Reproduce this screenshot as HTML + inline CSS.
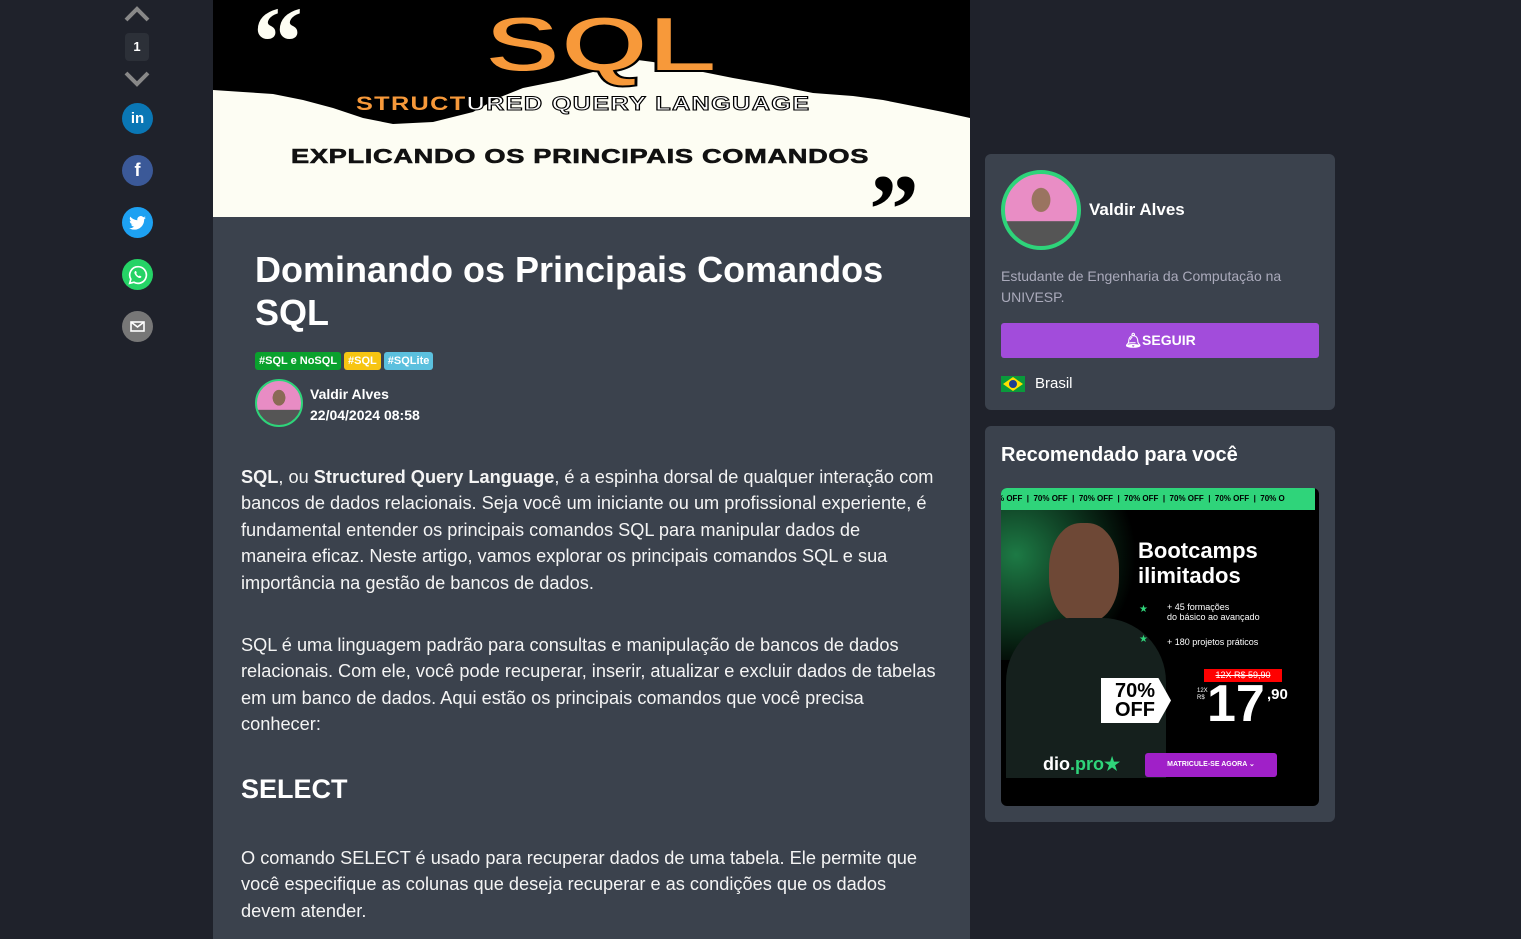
<!DOCTYPE html>
<html><head><meta charset="utf-8"><style>
*{margin:0;padding:0;box-sizing:border-box}
body{width:1521px;height:939px;overflow:hidden;background:#1f222b;font-family:"Liberation Sans",sans-serif;color:#fff;position:relative}
.abs{position:absolute}
.art{left:213px;top:0;width:757px;height:939px;background:#3b424d}
.banner{left:0;top:0;width:757px;height:217px;background:#fdfdf3;overflow:hidden}
.p{position:absolute;left:241px;font-size:18.2px;line-height:26.4px;color:#f4f4f4;white-space:nowrap}
.circ{position:absolute;left:122px;width:31px;height:31px;border-radius:50%;display:flex;align-items:center;justify-content:center;color:#fff;font-weight:bold}
.card{background:#3b424d;border-radius:6px}
.tag{display:inline-block;font-size:11px;font-weight:bold;padding:3px 4px;border-radius:3px;margin-right:3px;color:#fff}
.sx{transform-origin:0 0;white-space:nowrap}
</style></head><body>
<svg class="abs" style="left:124px;top:6px" width="26" height="16"><path d="M2 14 L13 3 L24 14" stroke="#888" stroke-width="4" fill="none"/></svg>
<div class="abs" style="left:125px;top:33px;width:24px;height:28px;background:#2c3038;border-radius:4px;font-size:13px;font-weight:bold;text-align:center;line-height:28px">1</div>
<svg class="abs" style="left:124px;top:71px" width="26" height="16"><path d="M2 2 L13 13 L24 2" stroke="#888" stroke-width="4" fill="none"/></svg>
<div class="circ" style="top:103px;background:#0a77b5;font-size:15px">in</div>
<div class="circ" style="top:155px;background:#3b5998;font-size:18px">f</div>
<div class="circ" style="top:207px;background:#1da1f2"><svg width="17" height="14" viewBox="0 0 24 20"><path d="M24 2.4a10 10 0 0 1-2.8.8A5 5 0 0 0 23.3.5a10 10 0 0 1-3.1 1.2A4.9 4.9 0 0 0 11.8 6 14 14 0 0 1 1.7.9a4.9 4.9 0 0 0 1.5 6.6A5 5 0 0 1 1 6.9a4.9 4.9 0 0 0 3.9 4.8 5 5 0 0 1-2.200.1 4.9 4.9 0 0 0 4.6 3.4A9.9 9.9 0 0 1 0 17.3 14 14 0 0 0 7.5 19.5c9 0 14-7.5 14-14v-.6A10 10 0 0 0 24 2.4z" fill="#fff"/></svg></div>
<div class="circ" style="top:259px;background:#25d366"><svg width="20" height="20" viewBox="0 0 24 24"><path d="M12 2a10 10 0 0 0-8.6 15L2 22l5.1-1.3A10 10 0 1 0 12 2z" fill="none" stroke="#fff" stroke-width="2"/><path d="M8.5 7.5c.5-.5 1.2-.3 1.4.3l.6 1.5c.1.4-.3.8-.6 1.1.6 1.3 1.7 2.4 3 3 .3-.3.7-.8 1.1-.6l1.5.6c.6.2.7 1 .3 1.4-.8.9-2 1.1-3.200.5-2-1-3.700-2.700-4.600-4.600-.6-1.200-.4-2.400.5-3.200z" fill="#fff"/></svg></div>
<div class="circ" style="top:311px;background:#777"><svg width="15" height="11"><rect x="1" y="1" width="13" height="9" fill="none" stroke="#fff" stroke-width="1.6"/><path d="M1 1 L7.5 6 L14 1" fill="none" stroke="#fff" stroke-width="1.6"/></svg></div>

<div class="abs art">
 <div class="abs banner">
  <svg width="757" height="217" style="position:absolute;left:0;top:0">
   <path d="M0 0 H757 V118 L730 112 L700 106 L670 100 L640 96 L600 93 L560 85 L520 78 L480 70 L440 62 L410 58 L380 72 L350 80 L310 88 L285 98 L260 112 L220 122 L180 124 L150 118 L120 108 L90 100 L60 94 L30 92 L0 90 Z" fill="#000"/>
  </svg>
  <div class="abs" style="left:40px;top:-8px;font:bold 100px 'Liberation Serif',serif;color:#fdfdf3;line-height:100px">“</div>
  <div class="abs" style="left:656px;top:160px;font:bold 100px 'Liberation Serif',serif;color:#000;line-height:100px">”</div>
  <div class="abs sx" style="left:272px;top:4px;font:900 78px 'Liberation Sans',sans-serif;color:#f7993a;line-height:80px;-webkit-text-stroke:2px #000;transform:scaleX(1.45)">SQL</div>
  <div class="abs sx" style="left:143px;top:94px;font:bold 19px 'Liberation Sans',sans-serif;letter-spacing:1px;transform:scaleX(1.33)"><span style="color:#f7993a">STRUCT</span><span style="color:#fff;-webkit-text-stroke:1px #000">URED QUERY LANGUAGE</span></div>
  <div class="abs sx" style="left:78px;top:146px;font:900 20px 'Liberation Sans',sans-serif;color:#111;letter-spacing:0.5px;transform:scaleX(1.36);-webkit-text-stroke:0.6px #111">EXPLICANDO OS PRINCIPAIS COMANDOS</div>
 </div>
 <div class="abs" style="left:42px;top:248px;font-size:36px;font-weight:bold;line-height:43px;color:#fff">Dominando os Principais Comandos<br>SQL</div>
 <div class="abs" style="left:42px;top:351px"><span class="tag" style="background:#0aa12d">#SQL e NoSQL</span><span class="tag" style="background:#f7c512">#SQL</span><span class="tag" style="background:#5bc0de">#SQLite</span></div>
 <div class="abs" style="left:42px;top:379px;width:48px;height:48px;border-radius:50%;border:2px solid #2ed47a;background:radial-gradient(ellipse at 50% 38%,#8a6a55 0 20%,transparent 21%),linear-gradient(#e88cc4 65%,#555 66%)"></div>
 <div class="abs" style="left:97px;top:384px;font-size:14px;font-weight:bold;line-height:21px">Valdir Alves<br>22/04/2024 08:58</div>
</div>

<div class="p" style="top:464px"><b>SQL</b>, ou <b>Structured Query Language</b>, é a espinha dorsal de qualquer interação com<br>bancos de dados relacionais. Seja você um iniciante ou um profissional experiente, é<br>fundamental entender os principais comandos SQL para manipular dados de<br>maneira eficaz. Neste artigo, vamos explorar os principais comandos SQL e sua<br>importância na gestão de bancos de dados.</div>
<div class="p" style="top:632px">SQL é uma linguagem padrão para consultas e manipulação de bancos de dados<br>relacionais. Com ele, você pode recuperar, inserir, atualizar e excluir dados de tabelas<br>em um banco de dados. Aqui estão os principais comandos que você precisa<br>conhecer:</div>
<div class="abs" style="left:241px;top:774px;font-size:27px;font-weight:bold">SELECT</div>
<div class="p" style="top:845px">O comando SELECT é usado para recuperar dados de uma tabela. Ele permite que<br>você especifique as colunas que deseja recuperar e as condições que os dados<br>devem atender.</div>

<div class="abs card" style="left:985px;top:154px;width:350px;height:256px">
 <div class="abs" style="left:16px;top:16px;width:80px;height:80px;border-radius:50%;border:4px solid #2ed47a;background:radial-gradient(ellipse at 50% 36%,#9a7460 0 18%,transparent 19%),linear-gradient(#e98dc5 65%,#555 66%)"></div>
 <div class="abs" style="left:104px;top:46px;font-size:17px;font-weight:bold">Valdir Alves</div>
 <div class="abs" style="left:16px;top:112px;font-size:14px;line-height:21px;color:#aab">Estudante de Engenharia da Computação na<br>UNIVESP.</div>
 <div class="abs" style="left:16px;top:169px;width:318px;height:35px;background:#a24cdb;border-radius:3px;text-align:center;line-height:35px;font-size:14px;font-weight:bold">🔔︎SEGUIR</div>
 <div class="abs" style="left:16px;top:222px;width:24px;height:16px;background:#0a9a3b;overflow:hidden"><div style="position:absolute;left:2px;top:1px;width:20px;height:14px;background:#fedf00;clip-path:polygon(50% 0,100% 50%,50% 100%,0 50%)"></div><div style="position:absolute;left:8px;top:4px;width:8px;height:8px;border-radius:50%;background:#1d3d8f"></div></div>
 <div class="abs" style="left:50px;top:221px;font-size:15px">Brasil</div>
</div>

<div class="abs card" style="left:985px;top:426px;width:350px;height:396px">
 <div class="abs" style="left:16px;top:18px;font-size:20px;font-weight:bold">Recomendado para você</div>
 <div class="abs" style="left:16px;top:62px;width:318px;height:318px;background:#000;border-radius:6px;overflow:hidden">
  <div class="abs" style="left:0;top:22px;width:150px;height:150px;background:radial-gradient(circle at 10% 30%,#1d7a45,transparent 70%)"></div>
  <div class="abs" style="left:48px;top:35px;width:70px;height:100px;border-radius:45%;background:#6e4836"></div>
  <div class="abs" style="left:5px;top:130px;width:160px;height:160px;border-radius:40% 40% 0 0;background:#15201d"></div>
  <div class="abs" style="left:0;top:0;width:318px;height:22px;background:#2fd47a;color:#000;font-size:8px;font-weight:bold;line-height:22px;white-space:nowrap;margin-left:-4px">% OFF &nbsp;| &nbsp;70% OFF &nbsp;| &nbsp;70% OFF &nbsp;| &nbsp;70% OFF &nbsp;| &nbsp;70% OFF &nbsp;| &nbsp;70% OFF &nbsp;| &nbsp;70% O</div>
  <div class="abs" style="left:137px;top:50px;font-size:22px;font-weight:bold;line-height:25px">Bootcamps<br>ilimitados</div>
  <div class="abs" style="left:138px;top:116px;color:#2fd47a;font-size:10px">★</div>
  <div class="abs" style="left:166px;top:114px;font-size:9px;line-height:10px">+ 45 formações<br>do básico ao avançado</div>
  <div class="abs" style="left:138px;top:146px;color:#2fd47a;font-size:10px">★</div>
  <div class="abs" style="left:166px;top:149px;font-size:9px">+ 180 projetos práticos</div>
  <div class="abs" style="left:203px;top:181px;width:78px;height:13px;background:#f00;font-size:9px;line-height:13px;text-align:center;text-decoration:line-through">12X R$ 59,90</div>
  <div class="abs" style="left:100px;top:190px;width:70px;height:45px;background:#fff;color:#000;font-size:20px;font-weight:900;line-height:19px;padding:4px 0 0 14px;clip-path:polygon(0 0,82% 0,100% 50%,82% 100%,0 100%)">70%<br>OFF</div>
  <div class="abs" style="left:196px;top:200px;font-size:6px;line-height:7px">12X<br>R$</div>
  <div class="abs" style="left:206px;top:190px;font-size:52px;font-weight:900;line-height:52px">17</div>
  <div class="abs" style="left:266px;top:198px;font-size:15px;font-weight:bold">,90</div>
  <div class="abs" style="left:42px;top:266px;font-size:18px;font-weight:900">dio<span style="color:#2fd47a">.pro★</span></div>
  <div class="abs" style="left:144px;top:265px;width:132px;height:24px;background:#a020c8;border-radius:3px;font-size:7px;font-weight:bold;text-align:center;line-height:24px">MATRICULE-SE AGORA ⌄</div>
 </div>
</div>
</body></html>
